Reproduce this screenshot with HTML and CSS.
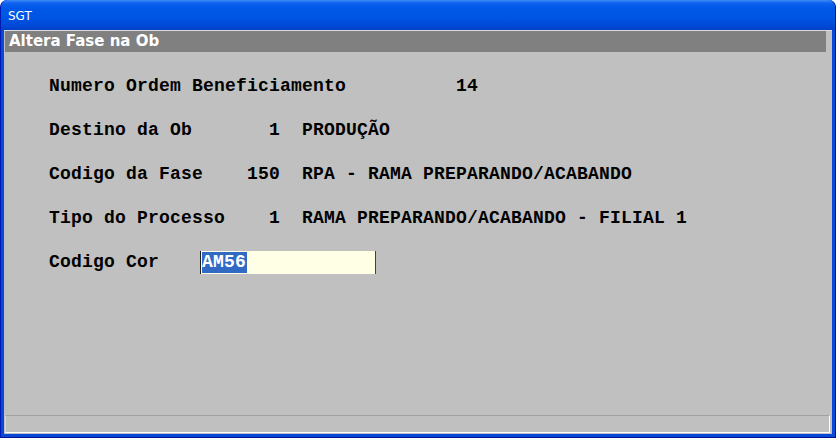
FILE: index.html
```html
<!DOCTYPE html>
<html lang="pt">
<head>
<meta charset="utf-8">
<title>SGT</title>
<link rel="stylesheet" href="styles.css">
</head>
<body>
<div class="window">
  <div class="titlebar"><span class="title">SGT</span></div>
  <div class="client">
    <div class="header">Altera Fase na Ob</div>
    <div class="content">
      <div class="row">Numero Ordem Beneficiamento          14</div>
      <div class="row">Destino da Ob       1  PRODUÇÃO</div>
      <div class="row">Codigo da Fase    150  RPA - RAMA PREPARANDO/ACABANDO</div>
      <div class="row">Tipo do Processo    1  RAMA PREPARANDO/ACABANDO - FILIAL 1</div>
      <div class="row field-row">
        <span class="label">Codigo Cor</span>
        <div class="input"><span class="selected">AM56</span></div>
      </div>
    </div>
    <div class="status"></div>
  </div>
</div>
</body>
</html>
```

FILE: styles.css
```css
html, body {
  margin: 0;
  padding: 0;
  background: #ffffff;
}

.window {
  width: 836px;
  height: 438px;
  box-sizing: border-box;
  display: flex;
  flex-direction: column;
  background: #0a48d8;
  border-radius: 7px 7px 0 0;
  border-left: 1px solid #0019b0;
  border-right: 1px solid #00138c;
  border-bottom: 1px solid #00138c;
  padding: 0 3px 3px 3px;
  overflow: hidden;
}

.titlebar {
  height: 30px;
  margin: 0 -3px;
  padding-left: 7px;
  display: flex;
  align-items: center;
  background: linear-gradient(#3d8dfc 0, #0f62ee 3px, #0058e8 8px, #0054e3 18px, #004ad8 25px, #0040c8 30px);
  border-radius: 7px 7px 0 0;
}

.title {
  font-family: "DejaVu Sans", sans-serif;
  font-size: 12px;
  color: #ffffff;
  margin-top: 2px;
}

.client {
  flex: 1;
  display: flex;
  flex-direction: column;
  background: #c0c0c0;
  border-top: 1px solid #dcdcdc;
}

.header {
  height: 21px;
  margin: 0 6px 0 1px;
  padding-left: 4px;
  background: #808080;
  color: #ffffff;
  font-family: "DejaVu Sans", Verdana, sans-serif;
  font-weight: bold;
  font-size: 15px;
  line-height: 21px;
}

.content {
  flex: 1;
  padding: 12px 0 0 45px;
}

.row {
  height: 44px;
  line-height: 44px;
  white-space: pre;
  font-family: "Liberation Mono", "Courier New", monospace;
  font-weight: bold;
  font-size: 18px;
  letter-spacing: 0.2px;
  color: #000000;
}

.field-row {
  display: flex;
  align-items: center;
}

.label {
  width: 151px;
  flex: none;
}

.input {
  width: 176px;
  height: 23px;
  box-sizing: border-box;
  border-left: 1px solid #202020;
  border-right: 1px solid #404040;
  background: #ffffe6;
  display: flex;
  align-items: stretch;
  padding: 1px 0 1px 1px;
  line-height: 21px;
}

.selected {
  background: #316ac5;
  color: #ffffff;
  padding-right: 1px;
}

.status {
  height: 16px;
  margin: 0 2px 1px 1px;
  border-top: 1px solid #a0a0a0;
  border-left: 1px solid #d8d8d8;
  border-right: 1px solid #ffffff;
  border-bottom: 1px solid #ffffff;
}
```
